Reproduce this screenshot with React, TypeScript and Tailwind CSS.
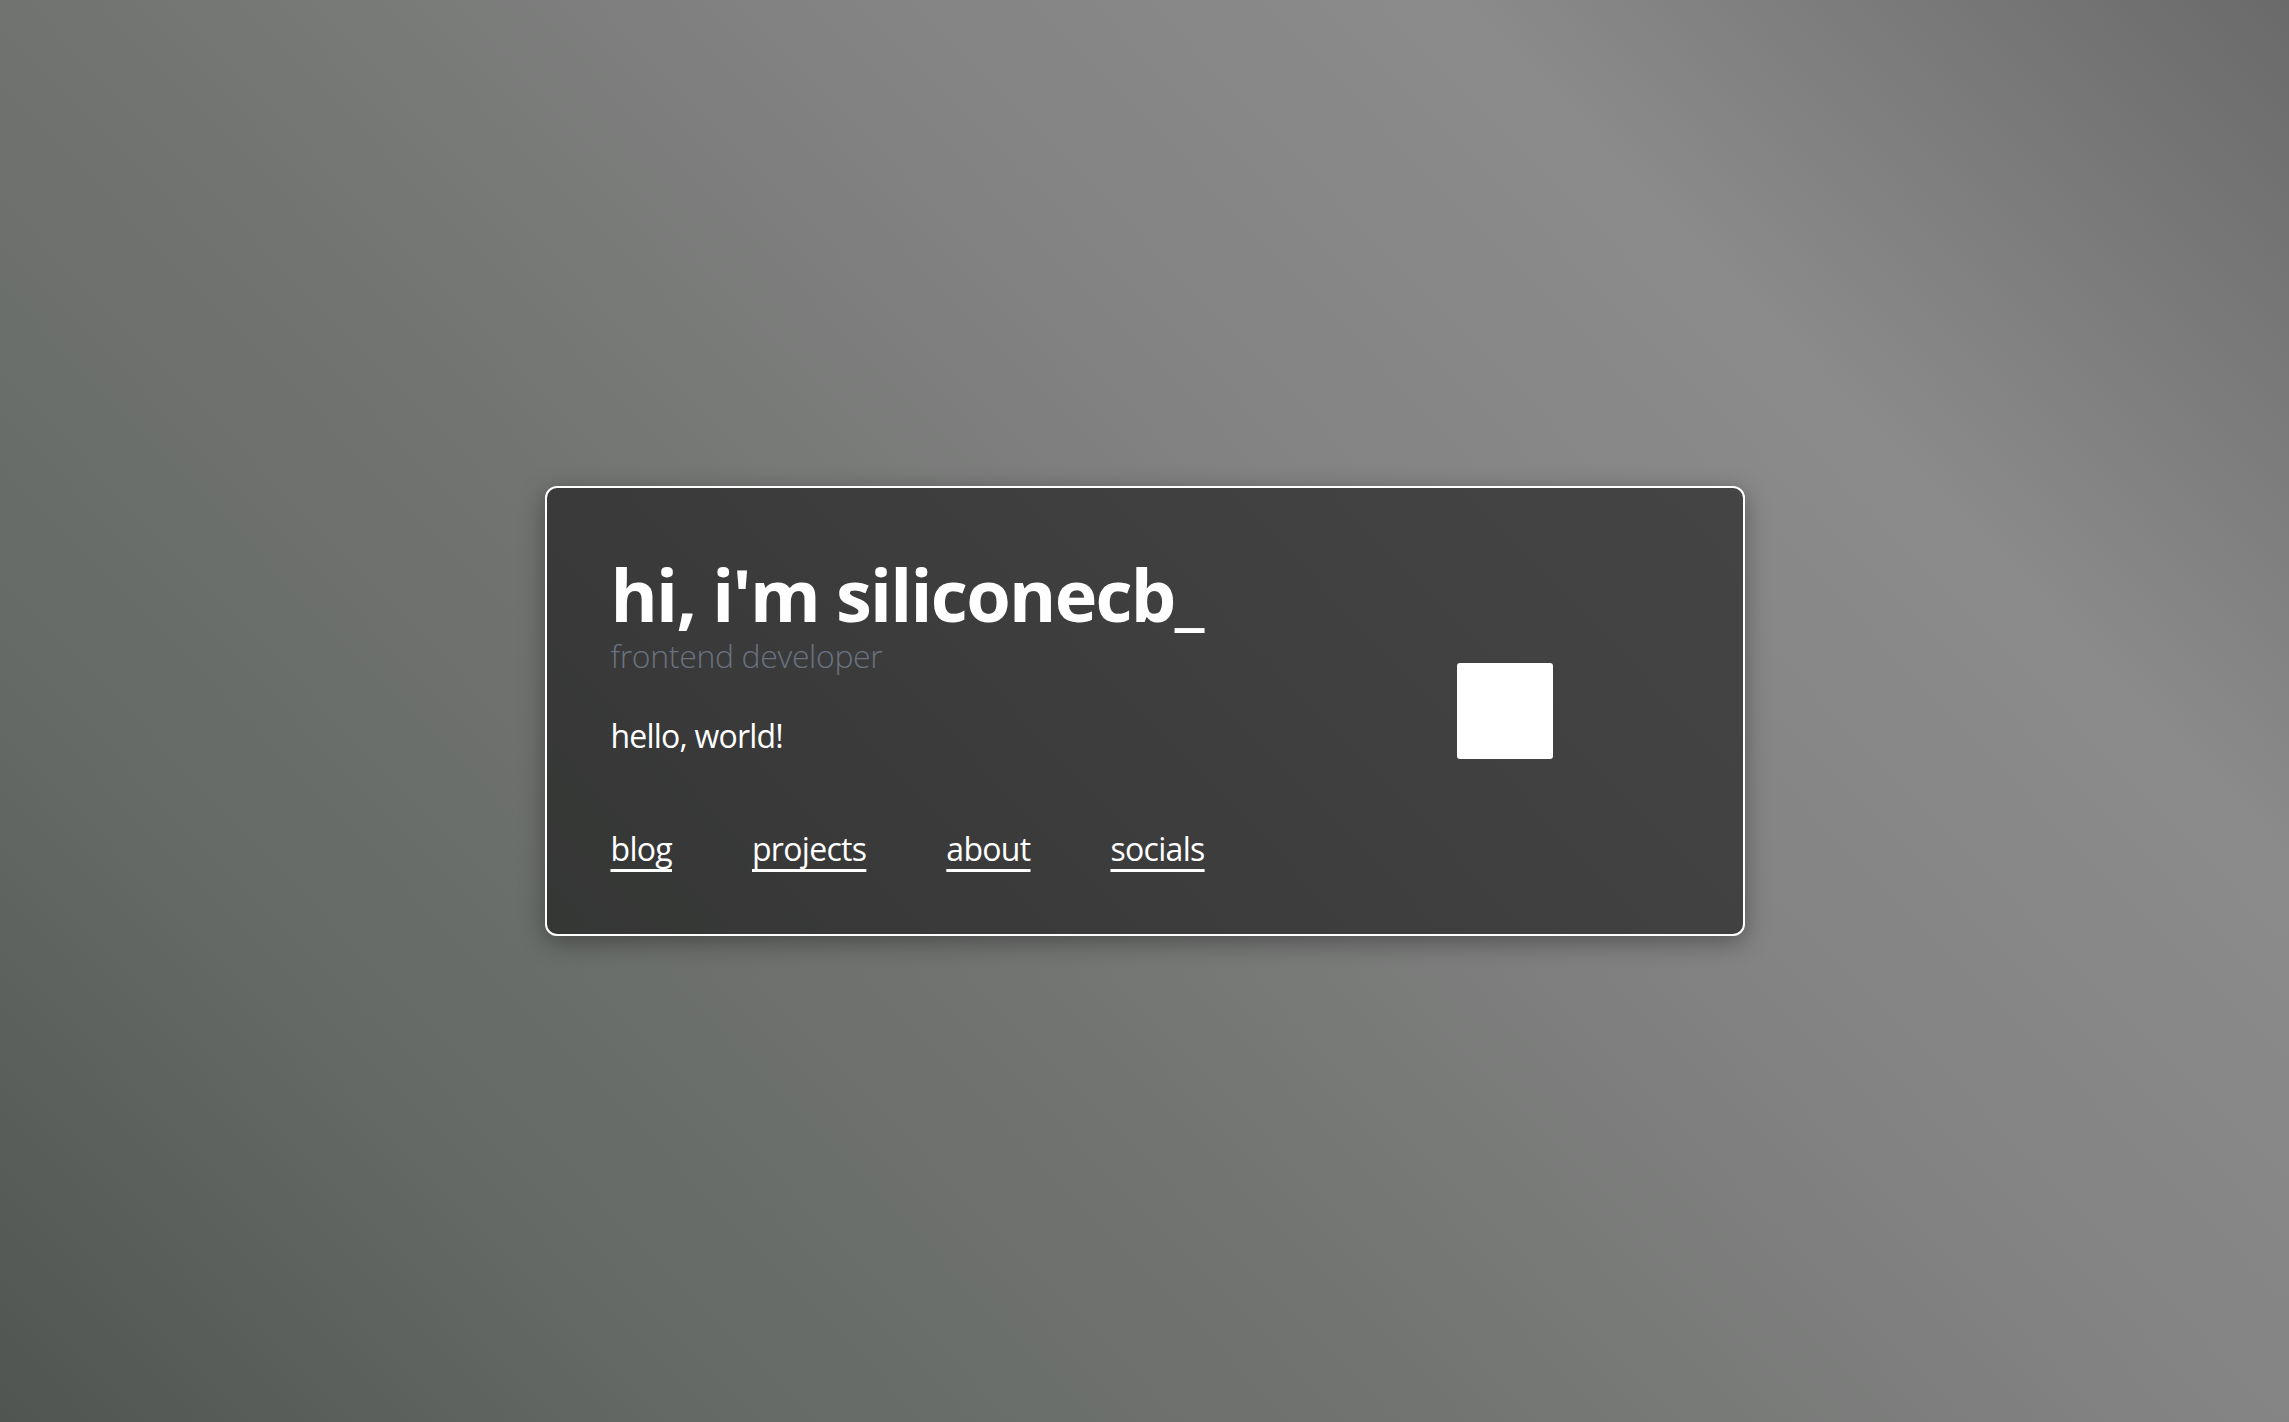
import React from "react";

export default function App() {
  const links = ["blog", "projects", "about", "socials"];
  return (
    <div
      className="w-full h-[1422px] flex items-center justify-center overflow-hidden"
      style={{
        background:
          "linear-gradient(46deg, #505551 0%, #656a66 20%, #717371 38%, #828382 60%, #8b8b8b 77%, #6a6a6a 100%)",
        fontFamily: '"Open Sans", "Noto Sans", sans-serif',
      }}
    >
      <div className="w-[1200px] h-[450px] rounded-[12px] border-2 border-white bg-black/50 shadow-[0_6px_24px_rgba(0,0,0,0.35)] flex justify-between pl-16 pr-[190px]">
        <div className="flex flex-col pt-[70px]">
          <h1 className="text-[72px] leading-[72px] font-bold text-white tracking-[-1.7px]">
            hi, i'm siliconecb_
          </h1>
          <p className="mt-[10px] text-[32px] leading-[32px] font-light text-[#6b7280] tracking-[-0.35px]">
            frontend developer
          </p>
          <p className="mt-[48px] text-[32px] leading-[32px] text-white tracking-[-0.8px]">hello, world!</p>
          <nav className="mt-[81px] flex gap-20">
            {links.map((l) => (
              <a
                key={l}
                href="#"
                className="text-[32px] leading-[32px] text-white tracking-[-0.7px] underline decoration-[3px] underline-offset-[8px] [text-decoration-skip-ink:none]"
              >
                {l}
              </a>
            ))}
          </nav>
        </div>
        <div className="self-center w-24 h-24 bg-white rounded-[3px]" />
      </div>
    </div>
  );
}
